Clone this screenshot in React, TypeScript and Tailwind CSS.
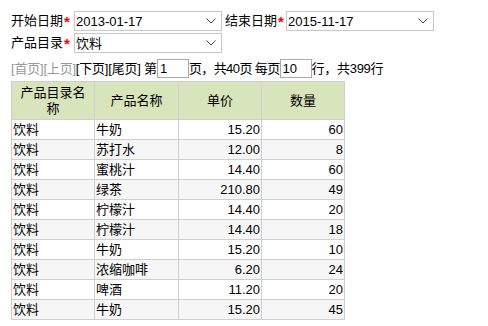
const rows = [
  ['饮料', '牛奶', '15.20', '60'],
  ['饮料', '苏打水', '12.00', '8'],
  ['饮料', '蜜桃汁', '14.40', '60'],
  ['饮料', '绿茶', '210.80', '49'],
  ['饮料', '柠檬汁', '14.40', '20'],
  ['饮料', '柠檬汁', '14.40', '18'],
  ['饮料', '牛奶', '15.20', '10'],
  ['饮料', '浓缩咖啡', '6.20', '24'],
  ['饮料', '啤酒', '11.20', '20'],
  ['饮料', '牛奶', '15.20', '45'],
];

function Select({ value }: { value: string }) {
  return (
    <div className="flex h-[20px] w-[148px] items-center justify-between border border-[#c8c8c8] bg-white pl-[1px] pr-[4px]">
      <span className="leading-none">{value}</span>
      <svg width="10" height="6" viewBox="0 0 10 6" className="mr-[1px]">
        <path d="M0.5 0.5 L5 5 L9.5 0.5" fill="none" stroke="#444" strokeWidth="1" />
      </svg>
    </div>
  );
}

function Label({ text, w }: { text: string; w: string }) {
  return (
    <span className={`flex items-center ${w}`}>
      {text}
      <span className="ml-[1px] text-[15px] font-bold leading-none text-[#ff0000]">*</span>
    </span>
  );
}

export default function App() {
  return (
    <div
      className="min-h-[326px] bg-white px-[11px] pt-[11px] text-[13px] text-black"
      style={{ fontFamily: '"Liberation Sans", "Noto Sans CJK SC", sans-serif' }}
    >
      {/* Filters */}
      <div className="flex items-center">
        <Label text="开始日期" w="w-[63px]" />
        <Select value="2013-01-17" />
        <span className="ml-[3px]"><Label text="结束日期" w="w-[61px]" /></span>
        <Select value="2015-11-17" />
      </div>
      <div className="mt-[2px] flex items-center">
        <Label text="产品目录" w="w-[63px]" />
        <Select value="饮料" />
      </div>

      {/* Pager */}
      <div className="mt-[6px] flex h-[19px] items-center whitespace-pre">
        <span className="tracking-[-0.2px] text-[#999]">[首页][上页]</span>
        <span className="tracking-[-0.2px]">[下页][尾页] 第</span>
        <div className="h-[19px] w-[32px] border border-[#aaa] pl-[2px] leading-[17px]">1</div>
        <span className="tracking-[-0.6px]">页，共40页 每页</span>
        <div className="h-[19px] w-[32px] border border-[#aaa] pl-[2px] leading-[17px]">10</div>
        <span className="tracking-[-0.3px]">行，共399行</span>
      </div>

      {/* Table */}
      <table className="mt-[3px] w-[333px] table-fixed border-collapse">
        <thead>
          <tr className="bg-[#d8e4bc]">
            <th className="h-[38px] w-[83px] border border-[#cfcfcf] px-[5px] text-center font-normal leading-[16px]">产品目录名称</th>
            <th className="w-[84px] border border-[#cfcfcf] text-center font-normal">产品名称</th>
            <th className="w-[83px] border border-[#cfcfcf] text-center font-normal">单价</th>
            <th className="w-[83px] border border-[#cfcfcf] text-center font-normal">数量</th>
          </tr>
        </thead>
        <tbody>
          {rows.map((r, i) => (
            <tr key={i} className={i % 2 === 1 ? 'bg-[#f6f6f6]' : 'bg-white'}>
              <td className="h-[20px] border border-[#cfcfcf] px-[1px] leading-[18px]">{r[0]}</td>
              <td className="border border-[#cfcfcf] px-[1px] leading-[18px]">{r[1]}</td>
              <td className="border border-[#cfcfcf] px-[1px] text-right leading-[18px]">{r[2]}</td>
              <td className="border border-[#cfcfcf] px-[1px] text-right leading-[18px]">{r[3]}</td>
            </tr>
          ))}
        </tbody>
      </table>
    </div>
  );
}
